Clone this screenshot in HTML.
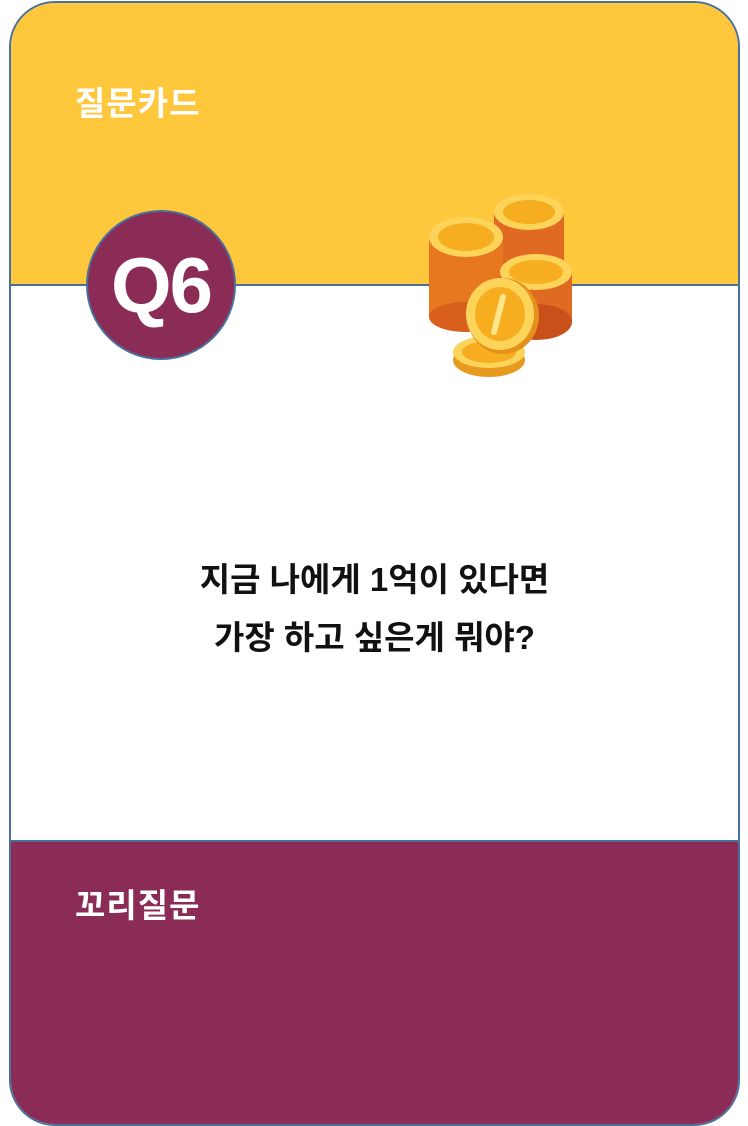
<!DOCTYPE html><html><head><meta charset="utf-8"><style>
html,body{margin:0;padding:0;background:#fff;width:748px;height:1126px;overflow:hidden}
.card{position:absolute;left:9px;top:1px;width:727px;height:1121px;border:2px solid #4a6f9c;border-radius:46px;overflow:hidden;background:#fff}
.top{position:absolute;left:0;top:0;width:100%;height:281px;background:#fec73c;border-bottom:2px solid #4a6f9c}
.bot{position:absolute;left:0;top:837px;width:100%;bottom:0;background:#8b2c56;border-top:2px solid #4a6f9c}
.lbl{position:absolute;left:64px;color:#fff;font:bold 33px "Liberation Sans","Noto Sans CJK KR",sans-serif;letter-spacing:1px}
.circ{position:absolute;left:75px;top:207px;width:146px;height:146px;border-radius:50%;background:#8b2c56;border:2px solid #4a6f9c;color:#fff;font:bold 78px "Liberation Sans","DejaVu Sans",sans-serif;text-align:center;line-height:146px;letter-spacing:-2px}
.q{position:absolute;left:0;width:100%;text-align:center;font:bold 33px "Liberation Sans","Noto Sans CJK KR",sans-serif;color:#111}
</style></head><body>
<div class="card">
<div class="top"></div><div class="bot"></div>
<div class="lbl" style="top:74px">질문카드</div>
<div class="lbl" style="top:876px">꼬리질문</div>
<div class="circ">Q6</div>
<div class="q" style="top:550px">지금 나에게 1억이 있다면</div>
<div class="q" style="top:608px">가장 하고 싶은게 뭐야?</div>
</div>
<svg style="position:absolute;left:0;top:0" width="748" height="1126">
<g stroke="none">
<rect x="494" y="212" width="70" height="60" fill="#e06a22"/>
<ellipse cx="529" cy="272" rx="35" ry="15" fill="#d9601c"/>
<ellipse cx="529" cy="212" rx="35" ry="18" fill="#fdd45a"/>
<ellipse cx="529" cy="212" rx="26" ry="12" fill="#f6ad1f"/>
<rect x="429" y="237" width="74" height="80" fill="#e8781f"/>
<ellipse cx="466" cy="317" rx="37" ry="15" fill="#d9601c"/>
<ellipse cx="466" cy="237" rx="37" ry="20" fill="#fdd45a"/>
<ellipse cx="466" cy="237" rx="28" ry="14" fill="#f6ad1f"/>
<rect x="500" y="272" width="72" height="50" fill="#e06a22"/>
<ellipse cx="536" cy="322" rx="36" ry="18" fill="#c9501a"/>
<ellipse cx="536" cy="272" rx="36" ry="18" fill="#fdd45a"/>
<ellipse cx="536" cy="272" rx="27" ry="12" fill="#f6ad1f"/>
<ellipse cx="489" cy="360" rx="36" ry="17" fill="#e89a1f"/>
<ellipse cx="489" cy="352" rx="36" ry="16" fill="#fdd45a"/>
<ellipse cx="489" cy="352" rx="27" ry="11" fill="#f6ad1f"/>
<ellipse cx="503" cy="316" rx="36" ry="38" fill="#e6901c"/>
<ellipse cx="500" cy="314" rx="34" ry="36" fill="#fdd45a"/>
<ellipse cx="500" cy="314" rx="25" ry="27" fill="#f6ad1f"/>
<path d="M503 297 L494 332" stroke="#fde58a" stroke-width="6" stroke-linecap="round"/>
</g></svg>
</body></html>
